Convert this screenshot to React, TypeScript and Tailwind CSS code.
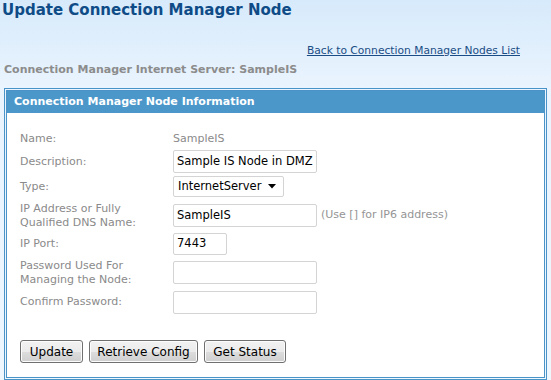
import React from "react";

const font = { fontFamily: '"DejaVu Sans", Verdana, sans-serif' };

function Label({ children }: { children: React.ReactNode }) {
  return <div className="text-[11px] leading-[14px] text-[#8a8a8a]">{children}</div>;
}

function TextBox({ value = "", w = "w-[144px]", h = "h-[23px]" }: { value?: string; w?: string; h?: string }) {
  return (
    <div
      className={`${w} ${h} flex items-center rounded-[2px] border border-[#d4d4d4] bg-white px-[3px] text-[11.5px] text-black`}
    >
      {value}
    </div>
  );
}

function Row({ h, label, children }: { h: string; label: React.ReactNode; children?: React.ReactNode }) {
  return (
    <div className={`grid grid-cols-[153px_1fr] items-center ${h}`}>
      <Label>{label}</Label>
      <div className="flex items-center gap-[4px]">{children}</div>
    </div>
  );
}

function Button({ children, w }: { children: React.ReactNode; w: string }) {
  return (
    <button
      className={`${w} h-[23px] rounded-[3px] border border-[#707070] bg-[linear-gradient(#f2f2f2,#ebebeb_50%,#dddddd_51%,#cfcfcf)] text-[12px] text-black shadow-[inset_0_0_0_1px_#fcfcfc]`}
    >
      {children}
    </button>
  );
}

export default function App() {
  return (
    <div
      className="h-[380px] w-[551px] overflow-hidden bg-[linear-gradient(#d7eafb,#eaf4fe_90px,#eef6fe)]"
      style={font}
    >
      <h1 className="pl-[2px] pt-[1px] text-[15px] font-bold leading-[18px] text-[#0f4c87]">
        Update Connection Manager Node
      </h1>

      <div className="mt-[25px] pr-[31px] text-right text-[10.7px] leading-[14px] text-[#1a4d85] underline">
        Back to Connection Manager Nodes List
      </div>
      <div className="pl-[4px] pt-[5px] text-[11px] font-bold leading-[14px] text-[#8c8c8c]">
        Connection Manager Internet Server: SampleIS
      </div>

      <div className="mx-[4px] mt-[11px] border border-[#4a93c9] p-px">
        <div className="h-[288px] border border-[#4a93c9] bg-white">
          <div className="flex h-[22px] items-center bg-[#4b97ca] pl-[7px] text-[11px] font-bold text-white">
            Connection Manager Node Information
          </div>

          <div className="pl-[13px] pt-[16px]">
            <Row h="h-[20px]" label="Name:">
              <span className="text-[11px] text-[#8a8a8a]">SampleIS</span>
            </Row>
            <Row h="h-[25px]" label="Description:">
              <TextBox value="Sample IS Node in DMZ" />
            </Row>
            <Row h="h-[25px]" label="Type:">
              <div className="flex h-[21px] w-[111px] items-center justify-between rounded-[2px] border border-[#d4d4d4] bg-white pl-[4px] pr-[7px] text-[11.5px] text-black">
                <span>InternetServer</span>
                <svg width="8" height="5" viewBox="0 0 8 5">
                  <path d="M0 0h8L4 4.5z" fill="#000" />
                </svg>
              </div>
            </Row>
            <Row
              h="h-[33px]"
              label={
                <>
                  IP Address or Fully
                  <br />
                  Qualified DNS Name:
                </>
              }
            >
              <TextBox value="SampleIS" />
              <span className="text-[11px] text-[#959595]">(Use [] for IP6 address)</span>
            </Row>
            <Row h="h-[24px]" label="IP Port:">
              <TextBox value="7443" w="w-[54px]" h="h-[22px]" />
            </Row>
            <Row
              h="h-[33px]"
              label={
                <>
                  Password Used For
                  <br />
                  Managing the Node:
                </>
              }
            >
              <TextBox />
            </Row>
            <Row h="h-[26px]" label="Confirm Password:">
              <TextBox />
            </Row>

            <div className="mt-[25px] flex gap-[6px]">
              <Button w="w-[63px]">Update</Button>
              <Button w="w-[109px]">Retrieve Config</Button>
              <Button w="w-[82px]">Get Status</Button>
            </div>
          </div>
        </div>
      </div>
    </div>
  );
}
